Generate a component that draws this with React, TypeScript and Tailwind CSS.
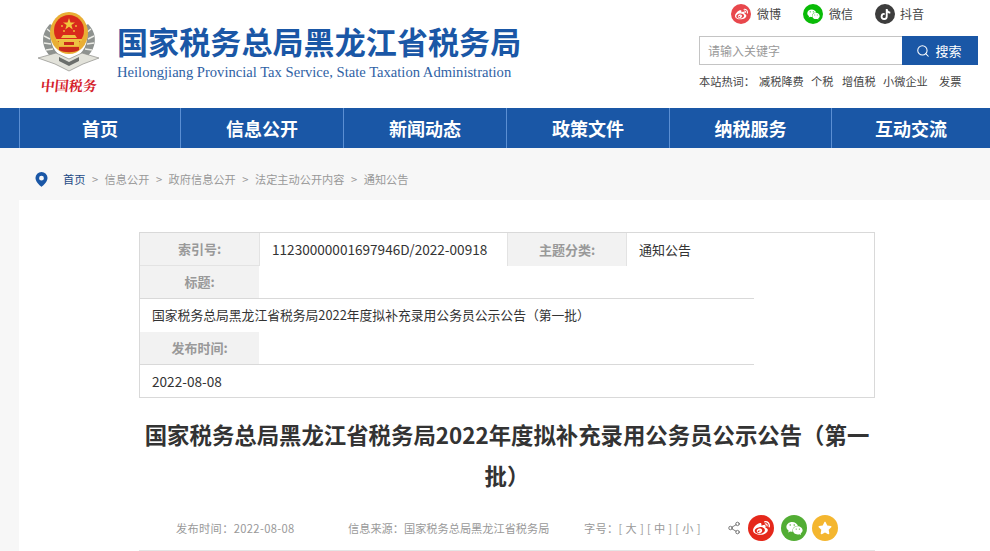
import { Search, Share2 } from 'lucide-react';
import { FaWeibo, FaWeixin, FaTiktok, FaStar } from 'react-icons/fa';

const navItems = [
  { label: '首页', width: 'w-[161px]' },
  { label: '信息公开', width: 'w-[163px]' },
  { label: '新闻动态', width: 'w-[163px]' },
  { label: '政策文件', width: 'w-[163px]' },
  { label: '纳税服务', width: 'w-[162px]' },
  { label: '互动交流', width: 'w-[159px]' },
];

const crumbs = ['信息公开', '政府信息公开', '法定主动公开内容'];

function Emblem() {
  return (
    <svg viewBox="0 0 62 62" className="w-[62px] h-[62px] block">
      {/* wheat wreath */}
      <path d="M12 12 C2 22 3 36 14 46 L20 42 C12 34 11 22 15 14 Z" fill="#8e928f" />
      <path d="M50 12 C60 22 59 36 48 46 L42 42 C50 34 51 22 47 14 Z" fill="#8e928f" />
      <path d="M9 17 L14 21 M6 24 L12 27 M6 31 L13 32 M8 38 L15 37 M53 17 L48 21 M56 24 L50 27 M56 31 L49 32 M54 38 L47 37" stroke="#ecece6" strokeWidth="1.5" />
      {/* ribbon base */}
      <path d="M0 46 L18 41 L31 47 L44 41 L61 46 L45 52 L31 59 L17 52 Z" fill="#e2e2da" stroke="#8d8d88" strokeWidth="0.7" />
      <path d="M21 45 L31 50 L41 45 L41 49 L31 54 L21 49 Z" fill="#6b6e6b" />
      {/* national emblem */}
      <ellipse cx="31" cy="21" rx="19" ry="21" fill="#e9ae35" />
      <ellipse cx="31" cy="18.500" rx="15" ry="15.500" fill="#d9291c" />
      <path d="M31 6 L32.500 10.400 L37 10.400 L33.400 13.100 L34.700 17.400 L31 14.800 L27.300 17.400 L28.600 13.100 L25 10.400 L29.500 10.400 Z" fill="#f2c63d" />
      <circle cx="24" cy="14" r="0.900" fill="#f2c63d" />
      <circle cx="38" cy="14" r="0.900" fill="#f2c63d" />
      <circle cx="26" cy="19" r="0.900" fill="#f2c63d" />
      <circle cx="36" cy="19" r="0.900" fill="#f2c63d" />
      <path d="M25 23 L37 23 L39 26 L23 26 Z" fill="#edc143" />
      <path d="M18 27 L44 27 L44 29 L41 29 L41 34 L21 34 L21 29 L18 29 Z" fill="#edc143" />
      <rect x="26" y="30" width="10" height="3" fill="#c92a1c" />
      <path d="M21 38 C26 41 36 41 41 38 L41 35 L21 35 Z" fill="#c92a1c" />
    </svg>
  );
}

export default function App() {
  return (
    <div className="h-[551px] overflow-hidden bg-[#f7f7f7] font-['Noto_Sans_CJK_SC','Microsoft_YaHei',sans-serif]">
      {/* Header */}
      <header className="h-[108px] bg-white flex justify-between pl-[38px] pr-[12px]">
        <div className="flex">
          <div className="flex flex-col items-center w-[62px] pt-[12px]">
            <Emblem />
            <span className="text-[14px] leading-[18px] font-bold text-[#d4202a] mt-[2px] whitespace-nowrap font-['Noto_Serif_CJK_SC','Noto_Sans_CJK_SC',serif] -skew-x-6">
              中国税务
            </span>
          </div>
          <div className="ml-[17px] pt-[20px]">
            <div className="text-[31px] leading-[42px] font-bold text-[#1a57a6] whitespace-nowrap tracking-[0.1px]">
              国家税务总局黑龙江省税务局
            </div>
            <div className="text-[14.6px] leading-[16px] mt-[2px] text-[#2f62a5] whitespace-nowrap font-['Liberation_Serif',serif]">
              Heilongjiang Provincial Tax Service, State Taxation Administration
            </div>
          </div>
        </div>

        <div className="w-[279px] text-[12px] text-[#444]">
          <div className="flex pl-[32px] pb-[8px] h-[36px] items-center">
            <span className="w-[20px] h-[20px] rounded-full bg-[#e8474c] flex items-center justify-center text-white">
              <FaWeibo size={13} />
            </span>
            <span className="ml-[6px] w-[46px] text-[#444]">微博</span>
            <span className="w-[20px] h-[20px] rounded-full bg-[#09bb07] flex items-center justify-center text-white">
              <FaWeixin size={13} />
            </span>
            <span className="ml-[6px] w-[46px] text-[#444]">微信</span>
            <span className="w-[20px] h-[20px] rounded-full bg-[#3d3d3d] flex items-center justify-center text-white">
              <FaTiktok size={11} />
            </span>
            <span className="ml-[5px] text-[#444]">抖音</span>
          </div>
          <div className="flex h-[29px]">
            <div className="w-[203px] border border-[#c4c4c4] border-r-0 pl-[8px] leading-[27px] text-[#999] text-[12px]">
              请输入关键字
            </div>
            <div className="w-[76px] bg-[#1a57a6] text-white text-[13px] flex items-center justify-center gap-[5px] pr-[2px]">
              <Search size={14} strokeWidth={1.8} />
              搜索
            </div>
          </div>
          <div className="flex h-[33px] items-center text-[11.2px] whitespace-nowrap text-[#444]">
            <span className="w-[60px]">本站热词：</span>
            <span className="w-[52px]">减税降费</span>
            <span className="w-[31px]">个税</span>
            <span className="w-[41px]">增值税</span>
            <span className="w-[56px]">小微企业</span>
            <span>发票</span>
          </div>
        </div>
      </header>

      {/* Nav */}
      <nav className="h-[40px] bg-[#1a57a6] flex pl-[19px]">
        {navItems.map((item) => (
          <div
            key={item.label}
            className={`${item.width} border-l border-[#5b8fd3] text-white text-[18px] font-bold flex items-center justify-center`}
          >
            {item.label}
          </div>
        ))}
      </nav>

      {/* Breadcrumb */}
      <div className="h-[52px] flex items-center pl-[35px] pt-[10px] text-[11.2px] text-[#999]">
        <svg viewBox="0 0 14 16" className="w-[13px] h-[15px] mr-[15px] mt-[1px]">
          <path fillRule="evenodd" d="M7 0a6.5 6.5 0 0 1 6.5 6.5C13.500 11 7 16 7 16S.5 11 .5 6.500A6.500 6.500 0 0 1 7 0Zm0 4a2.600 2.600 0 1 0 0 5.200A2.600 2.600 0 0 0 7 4Z" fill="#1a57a6" />
        </svg>
        <span className="text-[#1d4a86]">首页</span>
        <span className="mx-[6.5px]">&gt;</span>
        {crumbs.map((c) => (
          <span key={c} className="flex">
            <span>{c}</span>
            <span className="mx-[6.5px]">&gt;</span>
          </span>
        ))}
        <span>通知公告</span>
      </div>

      {/* Content */}
      <main className="ml-[19px] bg-white h-[351px] pt-[33px] pl-[120px]">
        <div className="w-[736px] h-[166px] -mt-[1px] border border-[#d9d9d9] text-[13px] text-[#333]">
          <div className="flex h-[33px]">
            <div className="w-[120px] bg-[#f2f2f2] border-r border-b border-[#e3e3e3] text-[#999] font-bold flex items-center justify-center">索引号:</div>
            <div className="w-[247px] pl-[12px] flex items-center whitespace-nowrap text-[13.6px]">11230000001697946D/2022-00918</div>
            <div className="w-[120px] bg-[#f2f2f2] border-x border-[#e3e3e3] text-[#999] font-bold flex items-center justify-center">主题分类:</div>
            <div className="pl-[12px] flex items-center">通知公告</div>
          </div>
          <div className="w-[614px]">
            <div className="h-[33px] border-b border-[#d9d9d9]">
              <div className="w-[119px] h-full bg-[#f2f2f2] text-[#999] font-bold flex items-center justify-center">标题:</div>
            </div>
            <div className="h-[33px] pl-[12px] pb-[2px] flex items-center text-[12.8px] whitespace-nowrap">
              国家税务总局黑龙江省税务局2022年度拟补充录用公务员公示公告（第一批）
            </div>
            <div className="h-[33px] border-b border-[#d9d9d9]">
              <div className="w-[119px] h-full bg-[#f2f2f2] text-[#999] font-bold flex items-center justify-center">发布时间:</div>
            </div>
            <div className="h-[32px] pl-[12px] flex items-center text-[13.6px]">2022-08-08</div>
          </div>
        </div>

        <h1 className="w-[736px] mt-[16px] text-center text-[22.4px] leading-[41px] font-bold text-[#333]">
          国家税务总局黑龙江省税务局2022年度拟补充录用公务员公示公告（第一批）
        </h1>

        <div className="w-[736px] h-[45px] mt-[10px] border-b border-[#e5e5e5] flex items-center pl-[37px] text-[11.2px] text-[#999] whitespace-nowrap">
          <span className="w-[172px] tracking-[0.35px]">发布时间：2022-08-08</span>
          <span className="w-[236px]">信息来源：国家税务总局黑龙江省税务局</span>
          <span className="w-[150px] tracking-[0.35px]">字号：[ 大 ] [ 中 ] [ 小 ]</span>
          <Share2 size={14} strokeWidth={1.3} className="text-[#555] mr-[7px] -ml-[7px]" />
          <span className="w-[26px] h-[26px] rounded-full bg-[#e5281b] flex items-center justify-center text-white mr-[7px]">
            <FaWeibo size={17} />
          </span>
          <span className="w-[26px] h-[26px] rounded-full bg-[#52ad34] flex items-center justify-center text-white mr-[5px]">
            <FaWeixin size={17} />
          </span>
          <span className="w-[26px] h-[26px] rounded-full bg-[#f4b62f] flex items-center justify-center text-white">
            <FaStar size={14} />
          </span>
        </div>
      </main>
    </div>
  );
}
